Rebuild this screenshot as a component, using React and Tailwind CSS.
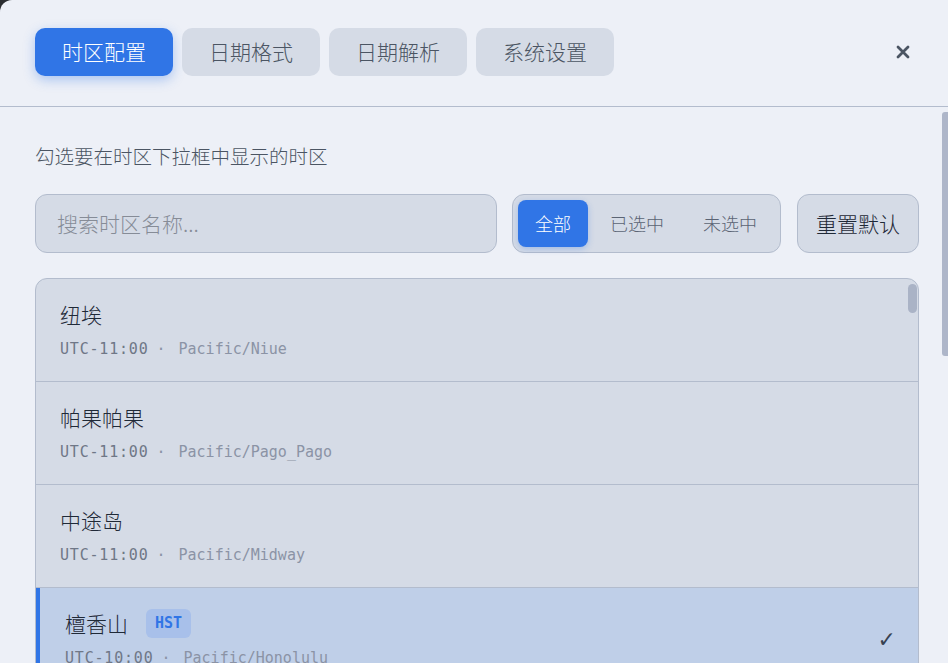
import { useState } from 'react';

const tabs = ['时区配置', '日期格式', '日期解析', '系统设置'];
const filters = ['全部', '已选中', '未选中'];

const zones = [
  { name: '纽埃', offset: 'UTC-11:00', id: 'Pacific/Niue' },
  { name: '帕果帕果', offset: 'UTC-11:00', id: 'Pacific/Pago_Pago' },
  { name: '中途岛', offset: 'UTC-11:00', id: 'Pacific/Midway' },
  { name: '檀香山', offset: 'UTC-10:00', id: 'Pacific/Honolulu', abbr: 'HST', checked: true },
  { name: '阿达克', offset: 'UTC-10:00', id: 'America/Adak' },
  { name: '塔希提', offset: 'UTC-10:00', id: 'Pacific/Tahiti' },
];

const ZoneRow = ({ zone }) => (
  <div
    className={`flex items-center border-b border-[#b3bccd] ${
      zone.checked ? 'bg-[#bfcfe8] border-l-[4px] border-l-[#3075e6] pl-[25px]' : 'pl-[24px]'
    } pr-[22px] pt-[21px] pb-[21px]`}
  >
    <div className="flex-1">
      <div className="flex items-center gap-[18px] h-[28px]">
        <span className="text-[21px] leading-[28px] font-light text-[#1f2937]">{zone.name}</span>
        {zone.abbr && (
          <span className="h-[29px] px-[9px] flex items-center rounded-md bg-[#a8c0ea] text-[#3075e6] text-[15px] font-bold font-['DejaVu_Sans_Mono',monospace]">
            {zone.abbr}
          </span>
        )}
      </div>
      <div className="mt-[10px] text-[15px] leading-[22px] font-['DejaVu_Sans_Mono',monospace] whitespace-nowrap">
        <span className="text-[#6f7787] tracking-[0.8px]">{zone.offset}</span>
        <span className="text-[#8b93a5] ml-[8px] mr-[13px]">·</span>
        <span className="text-[#8b93a5]">{zone.id}</span>
      </div>
    </div>
    {zone.checked && <span className="text-[22px] text-[#374151] font-['DejaVu_Sans',sans-serif]">✓</span>}
  </div>
);

export default function App() {
  const [activeTab, setActiveTab] = useState(0);
  const [filter, setFilter] = useState(0);

  return (
    <div className="h-screen overflow-hidden bg-[#2b2d31] font-['Noto_Sans_CJK_SC','Noto_Sans',sans-serif]">
      <div className="h-full rounded-tl-[12px] bg-[#edf0f7] flex flex-col">
        {/* Header with tabs */}
        <div className="h-[107px] shrink-0 border-b border-[#b3bccd] flex items-start pt-[28px] pl-[35px] pr-[38px]">
          <div className="flex gap-[9px]">
            {tabs.map((t, i) => (
              <button
                key={t}
                onClick={() => setActiveTab(i)}
                className={`w-[138px] h-[48px] rounded-[10px] text-[21px] font-light ${
                  i === activeTab
                    ? 'bg-[#3075e6] text-white shadow-[0_4px_12px_rgba(48,117,230,0.35)]'
                    : 'bg-[#d5dbe6] text-[#4b5563]'
                }`}
              >
                {t}
              </button>
            ))}
          </div>
          <button className="ml-auto mt-[17px] w-[14px] h-[14px]">
            <svg viewBox="0 0 14 14" className="w-[14px] h-[14px]" stroke="#4b5563" strokeWidth="2.8" strokeLinecap="round">
              <path d="M2 2L12 12M12 2L2 12" />
            </svg>
          </button>
        </div>

        {/* Body */}
        <div className="relative flex-1 overflow-hidden pt-[35px] pl-[35px] pr-[29px]">
          <p className="text-[19.5px] leading-[28px] font-light text-[#4b5563]">勾选要在时区下拉框中显示的时区</p>

          <div className="mt-[24px] flex h-[59px] gap-[15px]">
            <div className="flex-1 flex items-center rounded-[12px] border border-[#b3bccd] bg-[#d5dbe6] px-[21px]">
              <input
                placeholder="搜索时区名称..."
                className="w-full bg-transparent outline-none text-[21px] font-light text-[#1f2937] placeholder:text-[#868c97]"
              />
            </div>
            <div className="w-[269px] flex items-center gap-[5px] p-[5px] rounded-[12px] border border-[#b3bccd] bg-[#d5dbe6]">
              {filters.map((f, i) => (
                <button
                  key={f}
                  onClick={() => setFilter(i)}
                  className={`h-[47px] px-[17px] rounded-[8px] text-[18px] font-light ${
                    i === filter
                      ? 'bg-[#3075e6] text-white shadow-[0_2px_6px_rgba(48,117,230,0.3)]'
                      : 'text-[#5b6474]'
                  }`}
                >
                  {f}
                </button>
              ))}
            </div>
            <button className="ml-px w-[122px] rounded-[12px] border border-[#b3bccd] bg-[#d5dbe6] text-[21px] font-light text-[#1f2937]">
              重置默认
            </button>
          </div>

          {/* Zone list */}
          <div className="relative mt-[25px] h-[500px] overflow-hidden rounded-t-[12px] border border-[#b3bccd] bg-[#d5dbe6]">
            {zones.map((z) => (
              <ZoneRow key={z.id} zone={z} />
            ))}
            <div className="absolute top-[5px] right-[1px] w-[9px] h-[29px] rounded-full bg-[#aab3c6]" />
          </div>

          <div className="absolute top-[5px] right-0 w-[6px] h-[244px] rounded-l-[3px] bg-[#aeb6c9]" />
        </div>
      </div>
    </div>
  );
}
